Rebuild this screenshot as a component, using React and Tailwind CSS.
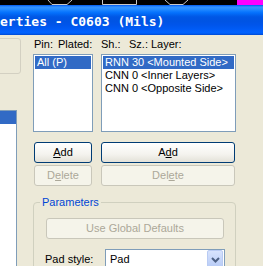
import React from "react";

const enabledBtn =
  "h-[21px] flex items-center justify-center rounded-[3px] border border-[#003C74] bg-[linear-gradient(to_bottom,#FFFFFF_0%,#F4F3EE_60%,#E3E1D8_100%)] text-black";
const disabledBtn =
  "h-[21px] flex items-center justify-center rounded-[3px] border border-[#C9C7BA] bg-[#F5F4EA] text-[#ACA899]";

export default function App() {
  return (
    <div className="w-[263px] h-[266px] overflow-hidden bg-[#ECE9D8] font-['Liberation_Sans',Arial,sans-serif] text-[11px] leading-[13px] text-black">
      {/* top strip of underlying canvas */}
      <div className="h-[5px] bg-black">
        <svg width="263" height="5" viewBox="0 0 263 5" className="block">
          <polyline points="48,0 52,4.5 67,4.5 72,0" fill="none" stroke="#C8C8C8" strokeWidth="1" />
          <polyline points="102.5,0 102.5,4.5 136.5,4.5 136.5,0" fill="none" stroke="#C8C8C8" strokeWidth="1" />
          <polyline points="165,0 170,4.5 183,4.5 188,0" fill="none" stroke="#C8C8C8" strokeWidth="1" />
          <rect x="237" y="0" width="26" height="5" fill="#FF00FF" />
        </svg>
      </div>
      {/* title bar */}
      <div className="h-[30px] flex items-center pt-[4px] bg-[linear-gradient(to_bottom,#0058EE_0px,#3593FF_2px,#288EFF_4px,#127DFF_6px,#036FFC_8px,#0262EE_10px,#0057E5_12px,#0054E3_16px,#0055EB_20px,#005BF5_24px,#0260FC_26px,#0062FE_28px,#0048D0_30px)]">
        <span className="font-['DejaVu_Sans_Mono',monospace] font-bold text-[13px] leading-[16px] text-white whitespace-pre">
          erties - C0603 (Mils)
        </span>
      </div>
      {/* body */}
      <div className="flex">
        {/* left, clipped column */}
        <div className="w-[33px] shrink-0">
          <div className="mt-[3px] ml-[-12px] w-[33px] h-[36px] rounded-[3px] border border-[#D3D0C2]" />
          <div className="mt-[36px] ml-[-10px] w-[27px] h-[170px] border border-[#7F9DB9] bg-white pt-0">
            <div className="h-[13px] w-[25px] bg-[#316AC5]" />
          </div>
        </div>
        {/* main column */}
        <div className="w-[203px] shrink-0">
          <div className="mt-[2px] h-[14px] leading-[14px] flex">
            <div className="w-[68px] flex pl-[1px]">
              <span className="w-[24px]">Pin:</span>
              <span>Plated:</span>
            </div>
            <div className="flex">
              <span className="w-[28px]">Sh.:</span>
              <span className="w-[22px]">Sz.:</span>
              <span>Layer:</span>
            </div>
          </div>
          <div className="mt-[3px] flex gap-[8px]">
            <div className="w-[60px] h-[78px] border border-[#7F9DB9] bg-white p-[1px]">
              <div className="h-[13px] px-[2px] bg-[#316AC5] text-white whitespace-nowrap">All (P)</div>
            </div>
            <div className="w-[135px] h-[78px] border border-[#7F9DB9] bg-white p-[1px]">
              <div className="h-[13px] px-[2px] bg-[#316AC5] text-white whitespace-nowrap">
                RNN 30 &lt;Mounted Side&gt;
              </div>
              <div className="h-[13px] px-[2px] whitespace-nowrap">CNN 0 &lt;Inner Layers&gt;</div>
              <div className="h-[13px] px-[2px] whitespace-nowrap">CNN 0 &lt;Opposite Side&gt;</div>
            </div>
          </div>
          <div className="mt-[10px] flex">
            <div className="ml-[1px] w-[58px] flex flex-col gap-[2px]">
              <div className={enabledBtn}>
                <span><u>A</u>dd</span>
              </div>
              <div className={disabledBtn}>
                <span>D<u>e</u>lete</span>
              </div>
            </div>
            <div className="ml-[9px] w-[134px] flex flex-col gap-[2px]">
              <div className={enabledBtn}>
                <span>A<u>d</u>d</span>
              </div>
              <div className={disabledBtn}>
                <span>Del<u>e</u>te</span>
              </div>
            </div>
          </div>
          <fieldset className="mt-[10px] w-[203px] h-[90px] rounded-[4px] border border-[#D0D0BF] pl-[6px]">
            <legend className="px-[2px] text-[#0046D5] leading-[13px]">Parameters</legend>
            <div className="mt-[9px] ml-[6px] w-[178px] h-[21px] flex items-center justify-center rounded-[3px] border border-[#C9C7BA] bg-[#F5F4EA] text-[#ACA899]">
              Use Global Defaults
            </div>
            <div className="mt-[10px] flex">
              <span className="ml-[5px] w-[60px] pt-[4px]">Pad style:</span>
              <div className="w-[120px] h-[21px] border border-[#7F9DB9] bg-white flex items-center">
                <span className="flex-1 pl-[4px]">Pad</span>
                <div className="mr-[1px] w-[16px] h-[19px] rounded-[2px] border border-[#B9CBF3] bg-[linear-gradient(to_bottom,#D7E3FD,#B6CAF6)] flex items-center justify-center">
                  <svg width="9" height="6" viewBox="0 0 9 6">
                    <polyline points="1,1 4.5,4.5 8,1" fill="none" stroke="#4D6185" strokeWidth="2" />
                  </svg>
                </div>
              </div>
            </div>
          </fieldset>
        </div>
      </div>
    </div>
  );
}
